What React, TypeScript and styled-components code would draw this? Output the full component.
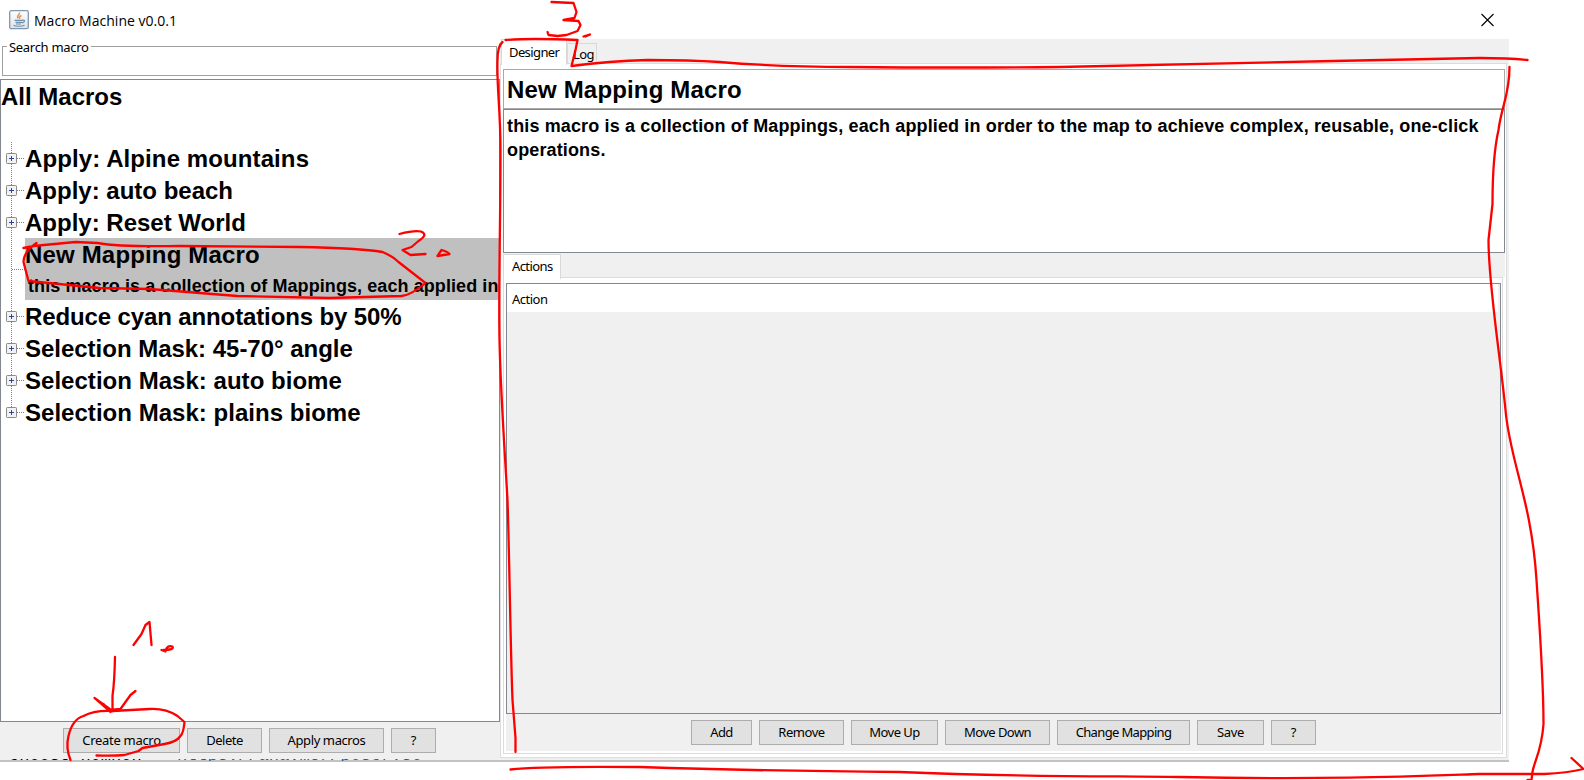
import React from 'react';
import styled, { createGlobalStyle, css } from 'styled-components';

const Global = createGlobalStyle`
  *{box-sizing:border-box}
  html,body{margin:0;background:#fff;overflow:hidden}
  body{font:13px 'Noto Sans',sans-serif;color:#000}
`;
const ui = css`font-family:'Noto Sans',sans-serif;font-size:13px;letter-spacing:-0.4px;`;

const Screen = styled.div`position:relative;width:1584px;height:780px;background:#fff;overflow:hidden;`;
const Window = styled.div`width:1509px;height:762px;display:flex;flex-direction:column;background:#f0f0f0;border-bottom:2px solid #c3c3c3;`;
const TitleBar = styled.header`height:39px;flex:none;background:#fff;display:flex;align-items:center;padding:0 8px 0 9px;gap:4px;`;
const Title = styled.span`font:14px/20px 'Open Sans',sans-serif;letter-spacing:0.03px;flex:1;padding-top:2px;white-space:nowrap;`;
const Body = styled.div`display:flex;flex:1;min-height:0;`;
const Left = styled.section`width:500px;display:flex;flex-direction:column;`;
const SearchArea = styled.div`height:40px;background:#fff;padding:7px 2px 3px;`;
const SearchBox = styled.fieldset`margin:0;padding:0;height:30px;width:495px;border:1px solid #a0a0a0;position:relative;`;
const Legend = styled.label`${ui} letter-spacing:-0.3px;position:absolute;left:4px;top:-9px;line-height:18px;padding:0 2px;background:#fff;white-space:nowrap;`;
const Tree = styled.div`height:643px;background:#fff;border:1px solid #828790;overflow:hidden;`;
const big = css`font:bold 24px/32px 'Liberation Sans',Arial,sans-serif;white-space:nowrap;`;
const Root = styled.div`${big} height:62px;padding-top:1px;`;
const Branches = styled.div`position:relative;`;
const Row = styled.div<{ $tall?: boolean }>`display:flex;height:${p => (p.$tall ? 62 : 32)}px;`;
const Gutter = styled.div`width:24px;flex:none;`;
const Label = styled.div<{ $sel?: boolean; $ls: number }>`${big} flex:1;min-width:0;padding-top:1px;letter-spacing:${p => p.$ls}px;overflow:hidden;background:${p => (p.$sel ? '#c0c0c0' : 'transparent')};`;
const Sub = styled.div`font:bold 18px/30px 'Liberation Sans',Arial,sans-serif;letter-spacing:0.08px;padding-left:3px;`;
const Bar = styled.div`display:flex;justify-content:center;gap:7px;`;
const LeftBar = styled(Bar)`padding:6px 1px 0 0;`;
const Button = styled.button<{ $w: number; $ls: number }>`${ui} letter-spacing:${p => p.$ls}px;width:${p => p.$w}px;height:25px;padding:0 0 1px;border:1px solid #adadad;background:#e1e1e1;color:#000;line-height:20px;white-space:nowrap;border-radius:0;`;
const Right = styled.section`width:1009px;display:flex;flex-direction:column;padding:0 2px 2px 0;`;
const Tabs = styled.div`height:24px;flex:none;display:flex;align-items:flex-end;padding-left:1px;`;
const Tab = styled.div<{ $w: number; $h: number; $lh: number; $pad: number; $on?: boolean }>`${ui} letter-spacing:-0.6px;width:${p => p.$w}px;height:${p => p.$h}px;flex:none;border:1px solid #d9d9d9;border-bottom:0;
  background:${p => (p.$on ? '#fff' : '#f0f0f0')};position:relative;margin-bottom:${p => (p.$on ? -2 : 0)}px;line-height:${p => p.$lh}px;padding-left:${p => p.$pad}px;white-space:nowrap;`;
const Page = styled.div`flex:1;min-height:0;border:1px solid #dcdcdc;background:#fff;padding:5px 1px 3px 2px;display:flex;flex-direction:column;`;
const NameBox = styled.div`height:40px;flex:none;border:1px solid #a9a9a9;padding:4px 3px;${big} letter-spacing:0.17px;`;
const Desc = styled.div`height:144px;flex:none;border:1px solid #828790;font:bold 18px/24px 'Liberation Sans',Arial,sans-serif;letter-spacing:0.137px;padding:4px 3px;`;
const SubTabs = styled(Tabs)`padding-left:0;background:#f0f0f0;`;
const SubPage = styled.div`flex:1;min-height:0;border:1px solid #dcdcdc;background:#fff;margin-right:2px;padding:5px 1px 2px 2px;display:flex;flex-direction:column;`;
const Table = styled.div`height:431px;flex:none;border:1px solid #828790;background:#f0f0f0;`;
const Th = styled.div`${ui} height:28px;background:#fff;line-height:30px;padding-left:5px;margin-right:2px;letter-spacing:-0.5px;`;
const ActionBar = styled(Bar)`flex:1;background:#f0f0f0;padding-top:6px;`;
const Ink = styled.svg`position:absolute;inset:0;pointer-events:none;`;
const Behind = styled.div`position:absolute;left:0;top:759px;height:2px;width:440px;overflow:hidden;font:17px/16px 'Liberation Mono',monospace;white-space:pre;`;
const BehindText = styled.div<{ $link?: boolean }>`position:absolute;top:-11px;left:${p => (p.$link ? 177 : 9)}px;color:${p => (p.$link ? '#0563c1' : '#000')};`;

const JavaIcon = () => (
  <svg width="21" height="20" viewBox="0 0 21 20">
    <defs><linearGradient id="j" x2="0" y2="1"><stop stopColor="#fff" /><stop offset="1" stopColor="#dde2e8" /></linearGradient></defs>
    <rect x=".7" y=".7" width="18.600" height="18" rx="1.500" fill="url(#j)" stroke="#7f98ad" strokeWidth="1.300" />
    <path d="M10.500 2.500c1 2-3.800 3-1.300 6M12.500 5.500c-3 1.300-2.300 2-1.300 3.200" fill="none" stroke="#e8924f" strokeWidth="1.400" />
    <path d="M5.500 10.300h8.500M6.500 12.300h6.500M7 14h5M13.500 10.200c3-.5 2.500 2-.7 2.800M4.500 15.300c2 1.300 8.500 1.200 11 0" fill="none" stroke="#6d90a9" strokeWidth="1.200" />
  </svg>
);
const nodes = [158, 190, 222, 316, 348, 380, 412];
const Lines = () => (
  <Ink width="24" height="300" viewBox="0 142 24 300">
    <path d="M10.500 142V412M11 269.500H24" stroke="#808080" strokeDasharray="1 1" fill="none" />
    {nodes.map(y => (
      <g key={y}>
        <path d={`M16 ${y + 0.5}H23`} stroke="#808080" strokeDasharray="1 1" />
        <rect x="5.500" y={y - 4.5} width="10" height="10" rx=".8" fill="#f2f2f2" stroke="#8a8a8a" />
        <path d={`M8 ${y + 0.5}H13M10.500 ${y - 2}V${y + 3}`} stroke="#2b479b" />
      </g>
    ))}
  </Ink>
);

const strokes = [
  'M552 2L574 3L577 12L575 18L564 20L579 21L581 25L578 31L567 35L558 36L549 35L548 32',
  'M584 36.500L587 35.500L590.500 34.500L586 36.500',
  'M506 40Q530 38 578 40L576 50L572 66Q610 61 648 60Q690 60 720 62Q780 67 850 67Q960 68 1060 67Q1200 64 1334 61L1480 58Q1510 58 1528 60',
  'M503 42Q498 46 498 60C497 85 501 110 501 150C501 230 499 280 500 340C501 390 504 430 508 500C510 560 511 650 513 700L516 738L516 752',
  'M1510 67C1510 95 1502 106 1499 130C1494 152 1493 180 1493 204L1489 240C1489 285 1500 350 1506 410C1510 460 1532 500 1537 580C1541 640 1544 680 1544 724C1542 752 1535 760 1533 772L1532 780L1528 780',
  'M511 769.500Q540 766 640 767Q760 771 900 772C1020 777 1110 776 1180 777C1330 780 1420 776 1480 774L1545 774Q1568 773 1584 769L1572 758',
  'M24 248L34 246L76 242L98 243Q120 247 180 246L300 247Q360 248 383 252Q393 256 399 262L426 283Q412 295 402 296L330 298L238 296Q190 292 150 289L100 288L29 281L24 262Q24 252 37 243',
  'M400 234Q420 229 424 233Q427 236 419 241L412 247L403 250L411 255L426 254',
  'M438 256L442 250Q449 252 450 254L438 256',
  'M134 645L142 634L146 625L150 622L152 645',
  'M162 650L166 651.500Q167 645 173 646.500Q175 650 164 650',
  'M115.500 657Q115 682 113 696V711L95 698L111 712L104 704M111 710L121 709L131 695L136 691',
  'M71 760Q66 748 69 736Q73 719 84 716Q95 710 113 711L150 709Q166 708 178 716L185 722Q184 733 181 736Q177 742 165 744L143 748L139 751L125 755Q115 756 97 755.500',
];

const before: [string, number][] = [['Apply: Alpine mountains', 0.1], ['Apply: auto beach', 0], ['Apply: Reset World', 0]];
const after: [string, number][] = [
  ['Reduce cyan annotations by 50%', -0.12],
  ['Selection Mask: 45-70° angle', -0.02],
  ['Selection Mask: auto biome', 0.03],
  ['Selection Mask: plains biome', 0.03],
];
const left: [string, number, number][] = [['Create macro', 117, -0.3], ['Delete', 75, -0.5], ['Apply macros', 115, -0.4], ['?', 45, 0]];
const right: [string, number, number][] = [
  ['Add', 61, -0.6], ['Remove', 85, -0.45], ['Move Up', 87, -0.55], ['Move Down', 105, -0.55],
  ['Change Mapping', 133, -0.65], ['Save', 67, -0.3], ['?', 45, 0],
];

export default function App() {
  return (
    <Screen>
      <Global />
      <Window>
        <TitleBar>
          <JavaIcon />
          <Title>Macro Machine v0.0.1</Title>
          <svg width="26" height="14" viewBox="0 0 26 14"><path d="M6.500 1l12 12M18.500 1l-12 12" stroke="#000" strokeWidth="1.100" /></svg>
        </TitleBar>
        <Body>
          <Left>
            <SearchArea><SearchBox><Legend>Search macro</Legend></SearchBox></SearchArea>
            <Tree>
              <Root>All Macros</Root>
              <Branches>
                <Lines />
                {before.map(([t, ls]) => <Row key={t}><Gutter /><Label $ls={ls}>{t}</Label></Row>)}
                <Row $tall><Gutter /><Label $sel $ls={0.17}>New Mapping Macro<Sub>this macro is a collection of Mappings, each applied in</Sub></Label></Row>
                {after.map(([t, ls]) => <Row key={t}><Gutter /><Label $ls={ls}>{t}</Label></Row>)}
              </Branches>
            </Tree>
            <LeftBar>{left.map(([t, w, ls]) => <Button key={t} $w={w} $ls={ls}>{t}</Button>)}</LeftBar>
          </Left>
          <Right>
            <Tabs>
              <Tab $w={66} $h={26} $lh={24} $pad={7} $on>Designer</Tab>
              <Tab $w={30} $h={20} $lh={21} $pad={5}>Log</Tab>
            </Tabs>
            <Page>
              <NameBox>New Mapping Macro</NameBox>
              <Desc>this macro is a collection of Mappings, each applied in order to the map to achieve complex, reusable, one-click operations.</Desc>
              <SubTabs><Tab $w={58} $h={25} $lh={22} $pad={8} $on>Actions</Tab></SubTabs>
              <SubPage>
                <Table><Th>Action</Th></Table>
                <ActionBar>{right.map(([t, w, ls]) => <Button key={t} $w={w} $ls={ls}>{t}</Button>)}</ActionBar>
              </SubPage>
            </Page>
          </Right>
        </Body>
      </Window>
      <Behind><BehindText>choose nomnon</BehindText><BehindText $link>https://anavmer/poscr.so</BehindText></Behind>
      <Ink width="1584" height="780">
        <g transform="translate(-0.5 0)" fill="none" stroke="#f00" strokeWidth="2.300" strokeLinecap="round" strokeLinejoin="round">
          {strokes.map(d => <path key={d} d={d} />)}
        </g>
      </Ink>
    </Screen>
  );
}
